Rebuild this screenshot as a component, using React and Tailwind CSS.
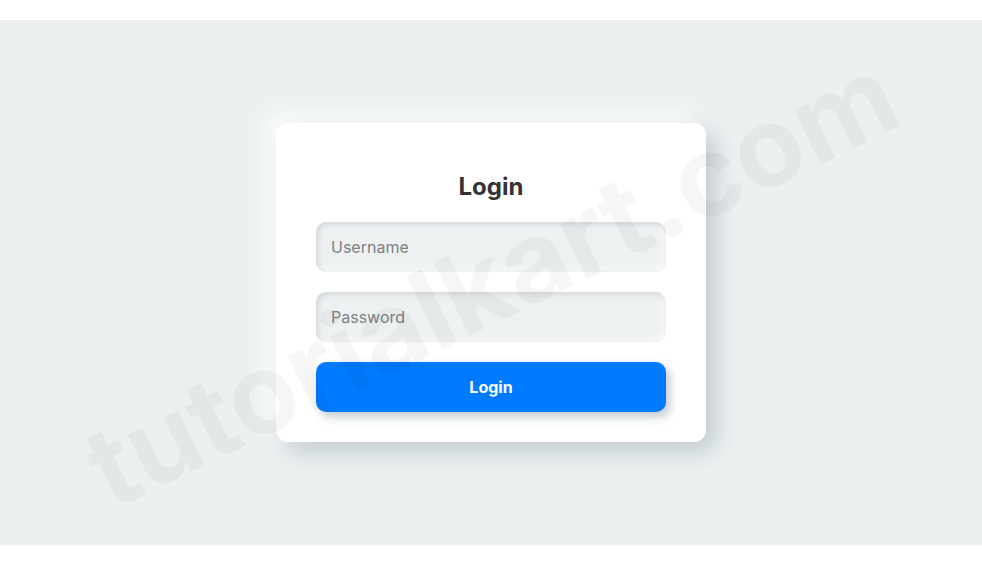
import React from "react";

export default function App() {
  return (
    <div className="relative w-full min-h-[564px] bg-white overflow-hidden" style={{ fontFamily: "Inter, 'Liberation Sans', sans-serif" }}>
      <div className="h-[20px] bg-white" />
      <div className="h-[525px] bg-[#ecf0f1] flex items-center justify-center">
        <div className="w-[430px] bg-white rounded-[12px] pt-[40px] pb-[30px] px-[40px] shadow-[10px_10px_22px_rgba(163,177,180,0.55),-10px_-10px_22px_rgba(255,255,255,0.9)]">
          <h2 className="mt-[6px] mb-[17px] h-[36px] leading-[36px] text-center text-[24px] font-bold text-[#333333]">Login</h2>
          <div className="flex flex-col gap-[20px]">
            <input
              type="text"
              placeholder="Username"
              className="h-[50px] w-full rounded-[10px] bg-[#eef1f2] px-[15px] text-[16px] text-[#333] placeholder:text-[#7d8182] outline-none shadow-[inset_2px_2px_6px_rgba(180,190,193,0.55),inset_-3px_-3px_6px_rgba(255,255,255,0.8)]"
            />
            <input
              type="password"
              placeholder="Password"
              className="h-[50px] w-full rounded-[10px] bg-[#eef1f2] px-[15px] text-[16px] text-[#333] placeholder:text-[#7d8182] outline-none shadow-[inset_2px_2px_6px_rgba(180,190,193,0.55),inset_-3px_-3px_6px_rgba(255,255,255,0.8)]"
            />
            <button className="h-[50px] w-full rounded-[10px] bg-[#007bff] text-white text-[16px] font-bold shadow-[4px_5px_10px_rgba(150,160,165,0.55)]">
              Login
            </button>
          </div>
        </div>
      </div>
      <div className="h-[19px] bg-white" />
      <div className="pointer-events-none absolute left-[491px] top-[280px] -translate-x-1/2 -translate-y-1/2 rotate-[-26deg] whitespace-nowrap text-[112px] font-bold leading-none text-black/[0.035]">
        tutorialkart.com
      </div>
    </div>
  );
}
